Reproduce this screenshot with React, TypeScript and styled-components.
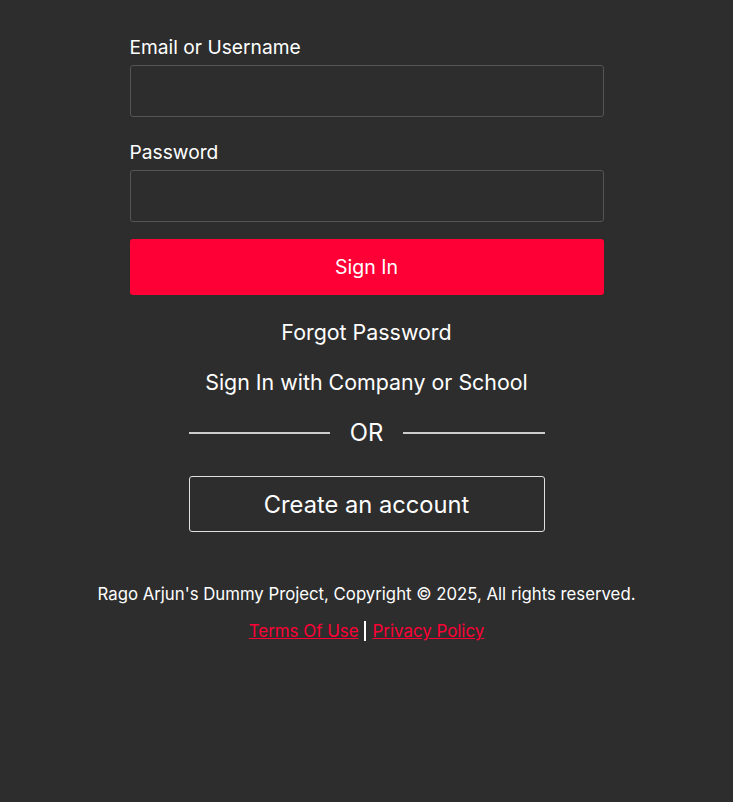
import React from "react";
import styled, { createGlobalStyle } from "styled-components";

const Global = createGlobalStyle`
  html, body {
    margin: 0;
    padding: 0;
    background: #2d2d2d;
    font-family: Inter, "Noto Sans", sans-serif;
    color: #ffffff;
  }
  * { box-sizing: border-box; }
`;

const Page = styled.div`
  min-height: 802px;
  background: #2d2d2d;
  display: flex;
  flex-direction: column;
  align-items: center;
  padding-top: 36px;
`;

const Form = styled.form`
  width: 474px;
  display: flex;
  flex-direction: column;
`;

const Field = styled.div<{ $mb: number }>`
  display: flex;
  flex-direction: column;
  gap: 6px;
  margin-bottom: ${(p) => p.$mb}px;
`;

const Label = styled.label`
  font-size: 19.2px;
  line-height: 23px;
  color: #ffffff;
`;

const Input = styled.input`
  height: 52px;
  width: 100%;
  background: #2d2d2d;
  border: 1px solid #555555;
  border-radius: 3px;
  color: #fff;
  font-family: inherit;
  font-size: 16px;
  padding: 0 12px;
  outline: none;
`;

const Primary = styled.button`
  height: 56px;
  width: 100%;
  background: #ff0036;
  border: none;
  border-radius: 3px;
  color: #fff;
  font-family: inherit;
  font-size: 19.5px;
`;

const TextLink = styled.div<{ $mt: number }>`
  margin-top: ${(p) => p.$mt}px;
  font-size: 21.4px;
  line-height: 24px;
  text-align: center;
  color: #fff;
`;

const Divider = styled.div`
  margin-top: 27px;
  width: 356px;
  display: flex;
  align-items: center;
  gap: 20px;
  font-size: 23.8px;
  line-height: 24px;
  color: #fff;
`;

const Line = styled.span`
  flex: 1;
  height: 1.5px;
  background: #cccccc;
`;

const Secondary = styled.button`
  margin-top: 31px;
  width: 356px;
  height: 56px;
  background: transparent;
  border: 1px solid #e0e0e0;
  border-radius: 3px;
  color: #fff;
  font-family: inherit;
  font-size: 23.7px;
`;

const Copyright = styled.div`
  margin-top: 52px;
  font-size: 16.75px;
  line-height: 20px;
  color: #fff;
  text-align: center;
`;

const Links = styled.div`
  margin-top: 17px;
  font-size: 16.9px;
  line-height: 20px;
  display: flex;
  align-items: center;
  gap: 6px;
`;

const RedLink = styled.a`
  color: #ff0036;
  text-decoration: underline;
`;

const Bar = styled.span`
  display: inline-block;
  width: 2px;
  height: 20px;
  background: #fff;
`;

export default function App() {
  return (
    <>
      <Global />
      <Page>
        <Form onSubmit={(e) => e.preventDefault()}>
          <Field $mb={24}>
            <Label>Email or Username</Label>
            <Input type="text" />
          </Field>
          <Field $mb={17}>
            <Label>Password</Label>
            <Input type="password" />
          </Field>
          <Primary type="submit">Sign In</Primary>
        </Form>
        <TextLink $mt={25}>Forgot Password</TextLink>
        <TextLink $mt={26}>Sign In with Company or School</TextLink>
        <Divider>
          <Line />
          OR
          <Line />
        </Divider>
        <Secondary>Create an account</Secondary>
        <Copyright>Rago Arjun's Dummy Project, Copyright © 2025, All rights reserved.</Copyright>
        <Links>
          <RedLink href="#">Terms Of Use</RedLink>
          <Bar />
          <RedLink href="#">Privacy Policy</RedLink>
        </Links>
      </Page>
    </>
  );
}
